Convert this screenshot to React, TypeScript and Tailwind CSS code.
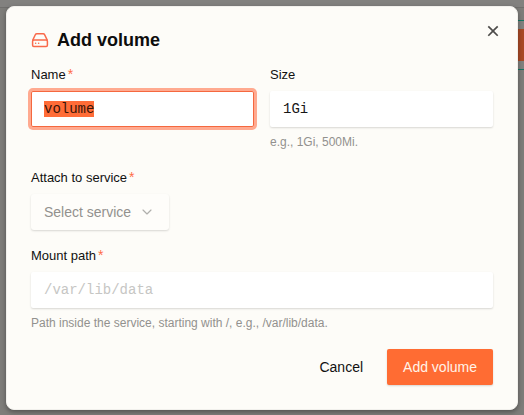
import { useEffect, useRef } from "react";
import type { ReactNode } from "react";
import { RiCloseLine } from "react-icons/ri";
import { ChevronDown } from "lucide-react";

const inputClass =
  "h-9 w-full rounded-[2px] bg-white px-[13px] font-['Liberation_Mono',monospace] text-sm text-[#161616] shadow-[0_1px_2px_rgba(0,0,0,0.15)] outline-none placeholder:text-[#c6c6c4] selection:bg-[#ff6c37] selection:text-[#3b1508]";

function DriveIcon() {
  return (
    <svg
      aria-hidden="true"
      viewBox="0 0 18 18"
      className="size-[18px] shrink-0"
      fill="none"
      stroke="#f9694a"
      strokeWidth="1.5"
      strokeLinejoin="round"
      strokeLinecap="round"
    >
      <path d="M1.8 9 4.3 3.8Q4.8 2.8 5.8 2.8H12.2Q13.2 2.8 13.7 3.8L16.2 9" />
      <rect x="1.6" y="9" width="14.8" height="6.4" rx="1.2" />
      <path d="M4.6 12.3h.1M7.6 12.3h.1" />
    </svg>
  );
}

type FieldProps = {
  id: string;
  label: string;
  required?: boolean;
  hint?: string;
  children: ReactNode;
};

function Field({ id, label, required, hint, children }: FieldProps) {
  return (
    <div className="flex min-w-0 flex-1 flex-col items-start gap-1.5">
      <label htmlFor={id} className="flex gap-0.5 text-[13px] leading-5 text-[#111]">
        {label}
        {required && <span className="-mt-px text-sm leading-5 text-[#ff6c47]">*</span>}
      </label>
      {children}
      {hint && <p className="text-xs leading-[19px] text-[#92918e]">{hint}</p>}
    </div>
  );
}

export default function App() {
  const nameRef = useRef<HTMLInputElement>(null);

  useEffect(() => {
    nameRef.current?.focus();
    nameRef.current?.select();
  }, []);

  return (
    <main className="relative min-h-screen bg-[#7e7d7a] px-1.5 pt-1.5 font-['Liberation_Sans',Arial,sans-serif]">
      <div className="absolute inset-x-0 top-0 h-2 border-b border-[#706f6d] bg-[#82817f]" />
      <div className="absolute top-5 right-0 flex h-[50px] w-10 items-center border-y border-[#157563] bg-[#82817f]">
        <div className="h-8 w-full bg-[#a94a26]" />
      </div>

      <section
        role="dialog"
        aria-labelledby="dialog-title"
        className="relative rounded-lg border border-[#f1f0ec] bg-[#fdfcf8] p-6 shadow-[0_2px_5px_rgba(0,0,0,0.35)]"
      >
        <button
          type="button"
          aria-label="Close"
          className="absolute top-4 right-4 flex size-4 items-center justify-center text-[#4d4c4a]"
        >
          <RiCloseLine className="size-5 shrink-0" />
        </button>

        <form className="flex flex-col gap-4" onSubmit={(e) => e.preventDefault()}>
          <header className="flex items-center gap-2">
            <DriveIcon />
            <h1 id="dialog-title" className="text-lg leading-[18px] font-bold text-[#0d0d0d]">
              Add volume
            </h1>
          </header>

          <div className="flex gap-4">
            <Field id="name" label="Name" required>
              <input
                id="name"
                ref={nameRef}
                defaultValue="volume"
                className={`${inputClass} focus:shadow-[inset_0_0_0_1px_#f5683f,0_0_0_3px_#ffaa90]`}
              />
            </Field>
            <Field id="size" label="Size" hint="e.g., 1Gi, 500Mi.">
              <input id="size" defaultValue="1Gi" className={inputClass} />
            </Field>
          </div>

          <Field id="service" label="Attach to service" required>
            <div className="relative">
              <select
                id="service"
                className="h-9 w-[138px] appearance-none rounded-[3px] bg-[#fefdfa] pr-8 pl-[13px] text-sm text-[#92918e] shadow-[0_1px_2px_rgba(0,0,0,0.15)] outline-none"
              >
                <option>Select service</option>
              </select>
              <ChevronDown
                aria-hidden="true"
                strokeWidth={1.75}
                className="pointer-events-none absolute inset-y-0 right-3.5 my-auto size-4 text-[#b0afac]"
              />
            </div>
          </Field>

          <Field
            id="path"
            label="Mount path"
            required
            hint="Path inside the service, starting with /, e.g., /var/lib/data."
          >
            <input id="path" placeholder="/var/lib/data" className={inputClass} />
          </Field>

          <footer className="flex justify-end gap-2">
            <button type="button" className="h-9 px-4 text-sm text-[#111]">
              Cancel
            </button>
            <button
              type="submit"
              className="h-9 rounded-[2px] bg-[#ff6c33] px-4 text-sm text-[#fff3e8] shadow-[0_1px_2px_rgba(0,0,0,0.15)]"
            >
              Add volume
            </button>
          </footer>
        </form>
      </section>
    </main>
  );
}
